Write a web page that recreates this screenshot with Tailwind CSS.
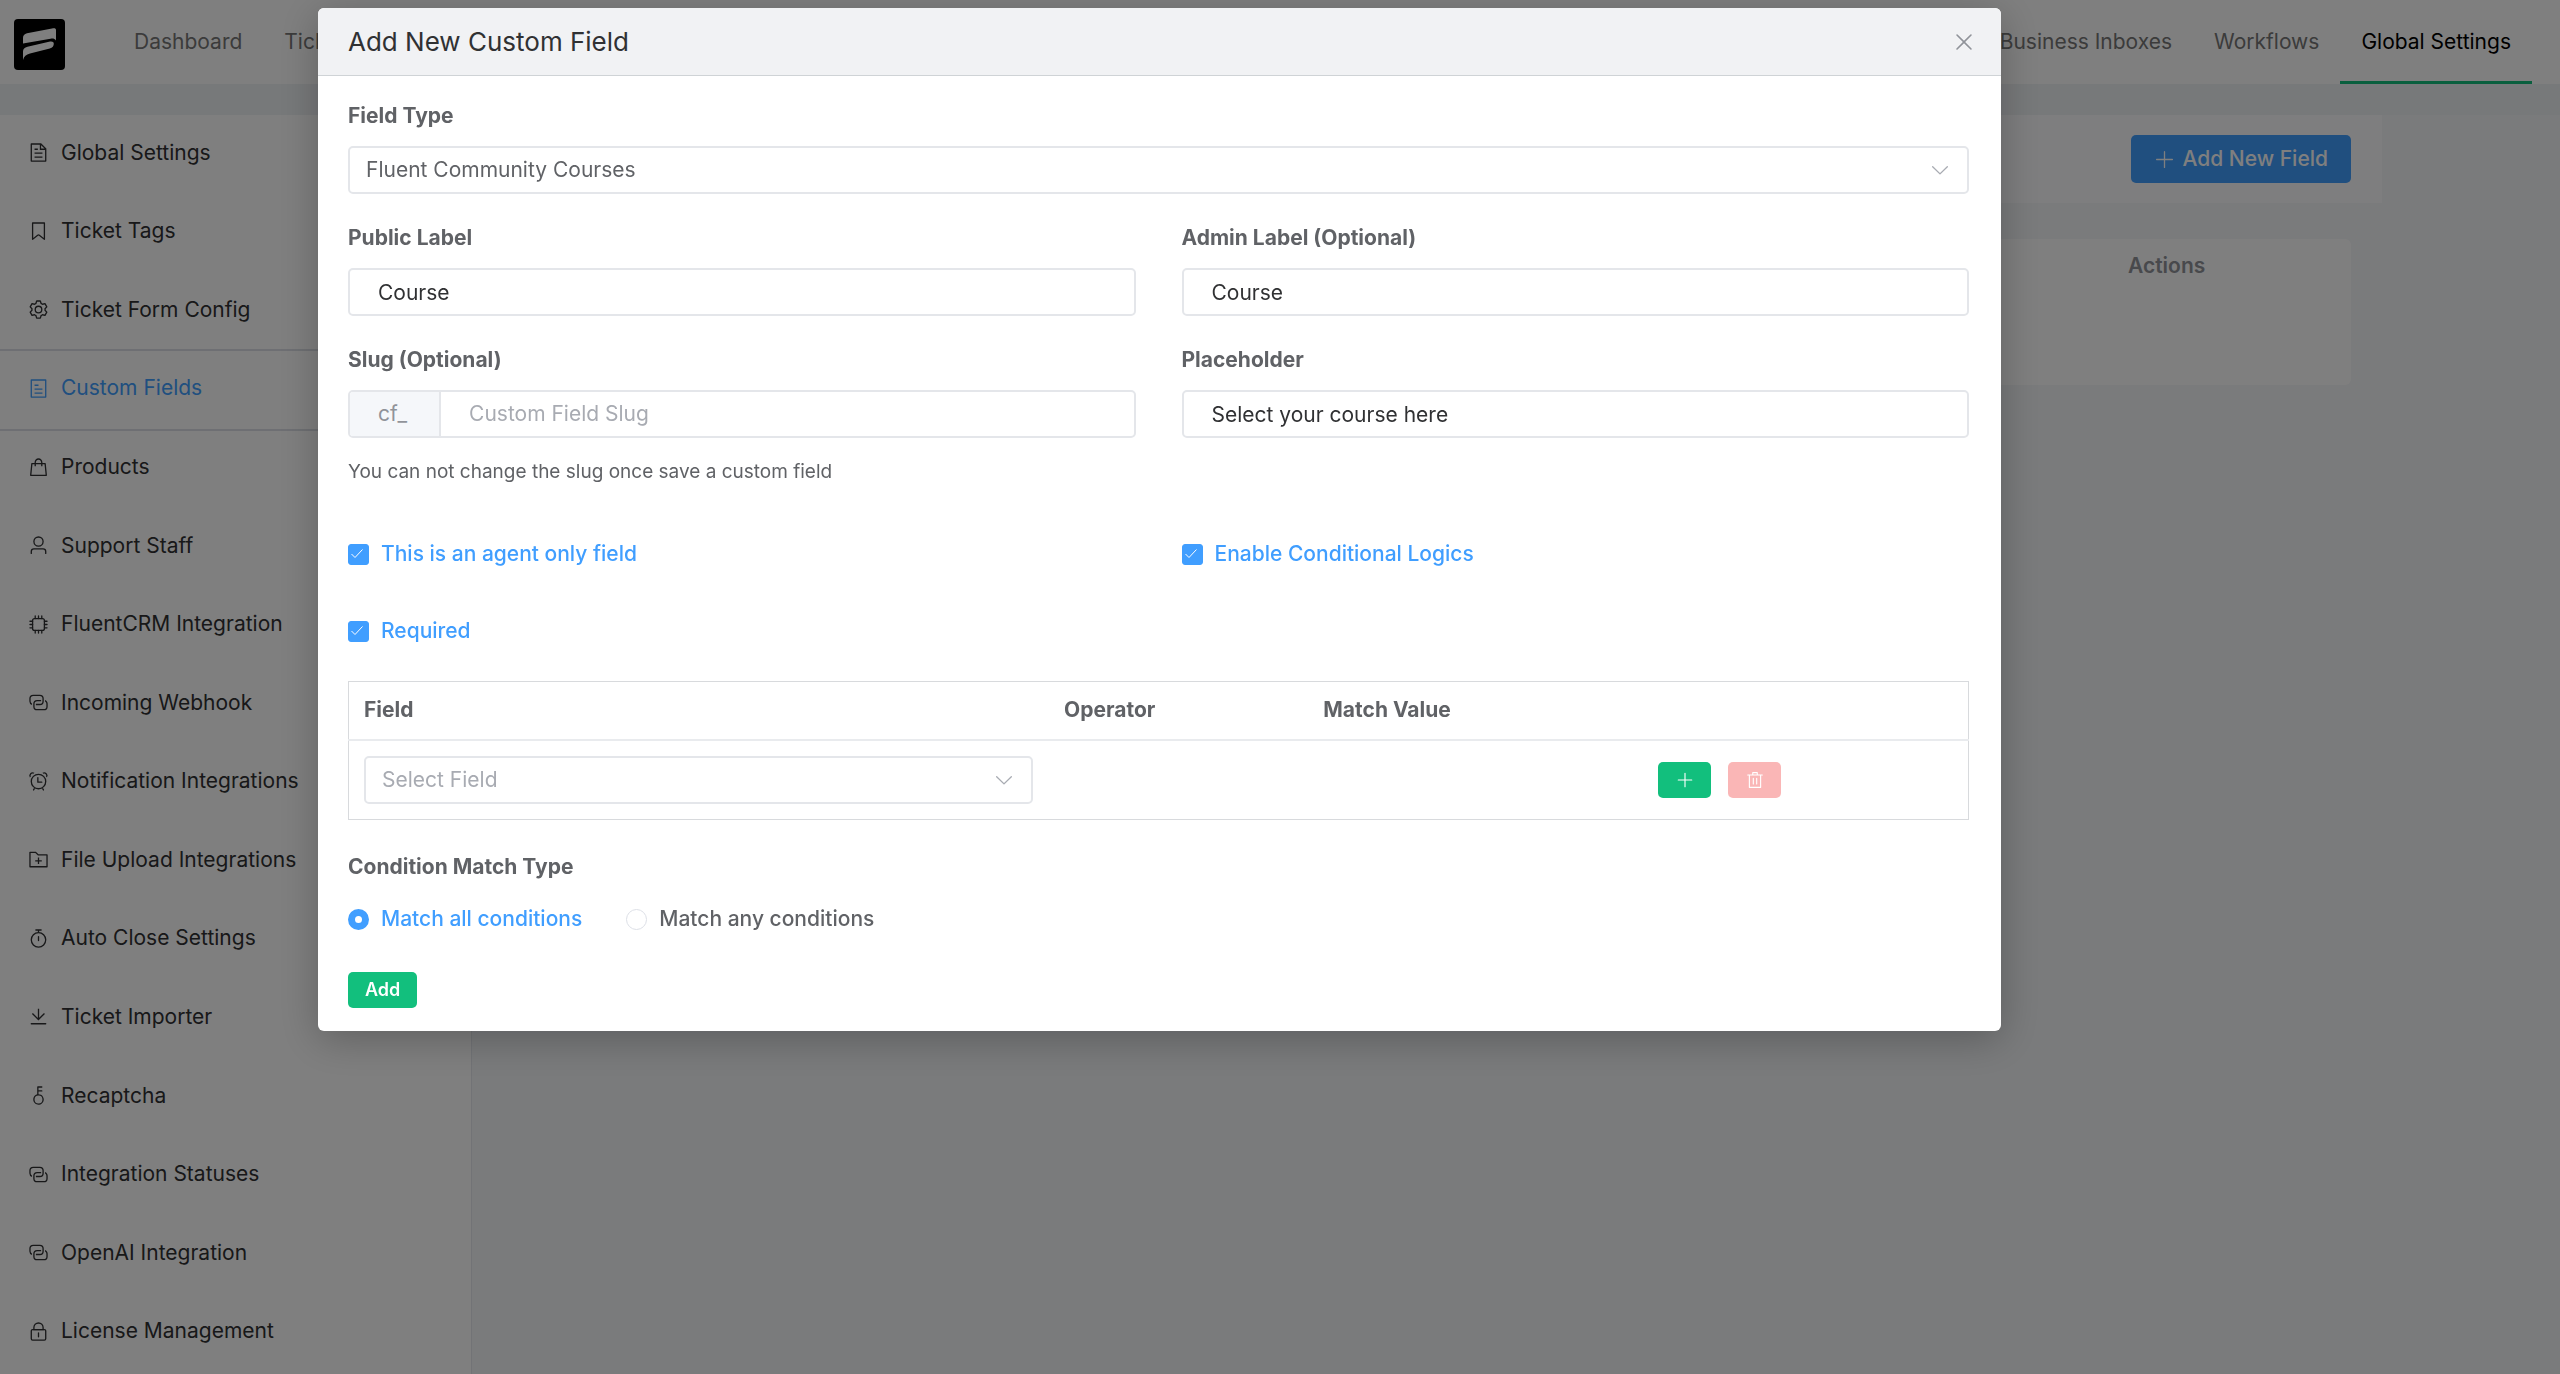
<!DOCTYPE html>
<html lang="en">
<head>
    <meta charset="UTF-8">
    <meta name="viewport" content="width=device-width, initial-scale=1.0">
    <title>Custom Fields - Global Settings</title>
    <script src="https://cdn.jsdelivr.net/npm/@tailwindcss/browser@4"></script>
</head>
<body class="h-screen overflow-hidden bg-[#f4f6f9] font-['Inter',sans-serif] text-[21px] leading-7 text-[#606266]">

    <!-- Icon set -->
    <svg class="hidden" aria-hidden="true">
        <symbol id="document" viewBox="0 0 1024 1024"><path d="M832 384H576V128H192v768h640zm-26.496-64L640 154.496V320zM160 64h480l256 256v608a32 32 0 0 1-32 32H160a32 32 0 0 1-32-32V96a32 32 0 0 1 32-32m160 448h384v64H320zm0-192h160v64H320zm0 384h384v64H320z"/></symbol>
        <symbol id="tag" viewBox="0 0 1024 1024"><path d="M256 128v698.88l196.032-156.864a96 96 0 0 1 119.936 0L768 826.816V128zm-32-64h576a32 32 0 0 1 32 32v797.44a32 32 0 0 1-51.968 24.96L531.968 720a32 32 0 0 0-39.936 0L243.968 918.4A32 32 0 0 1 192 893.44V96a32 32 0 0 1 32-32"/></symbol>
        <symbol id="setting" viewBox="0 0 1024 1024"><path d="M600.704 64a32 32 0 0 1 30.464 22.208l35.2 109.376c14.784 7.232 28.928 15.36 42.432 24.512l112.384-24.192a32 32 0 0 1 34.432 15.36L944.32 364.8a32 32 0 0 1-4.032 37.504l-77.12 85.12a357.12 357.12 0 0 1 0 49.024l77.12 85.248a32 32 0 0 1 4.032 37.504l-88.704 153.6a32 32 0 0 1-34.432 15.296L708.8 803.904c-13.44 9.088-27.648 17.28-42.368 24.512l-35.264 109.376A32 32 0 0 1 600.704 960H423.296a32 32 0 0 1-30.464-22.208L357.696 828.48a351.616 351.616 0 0 1-42.56-24.64l-112.32 24.256a32 32 0 0 1-34.432-15.36L79.68 659.2a32 32 0 0 1 4.032-37.504l77.12-85.248a357.12 357.12 0 0 1 0-48.896l-77.12-85.248A32 32 0 0 1 79.68 364.8l88.704-153.6a32 32 0 0 1 34.432-15.296l112.32 24.256c13.568-9.152 27.776-17.408 42.56-24.64l35.2-109.312A32 32 0 0 1 423.232 64H600.64zm-23.424 64H446.72l-36.352 113.088-24.512 11.968a294.113 294.113 0 0 0-34.816 20.096l-22.656 15.36-116.224-25.088-65.28 113.152 79.68 88.192-1.92 27.136a293.12 293.12 0 0 0 0 40.192l1.92 27.136-79.808 88.192 65.344 113.152 116.224-25.024 22.656 15.296a294.113 294.113 0 0 0 34.816 20.096l24.512 11.968L446.72 896h130.688l36.48-113.152 24.448-11.904a288.282 288.282 0 0 0 34.752-20.096l22.592-15.296 116.288 25.024 65.28-113.152-79.744-88.192 1.92-27.136a293.12 293.12 0 0 0 0-40.256l-1.92-27.136 79.808-88.128-65.344-113.152-116.288 24.96-22.592-15.232a287.616 287.616 0 0 0-34.752-20.096l-24.448-11.904L577.344 128zM512 320a192 192 0 1 1 0 384 192 192 0 0 1 0-384m0 64a128 128 0 1 0 0 256 128 128 0 0 0 0-256"/></symbol>
        <symbol id="tickets" viewBox="0 0 1024 1024"><path d="M192 128v768h640V128zm-32-64h704a32 32 0 0 1 32 32v832a32 32 0 0 1-32 32H160a32 32 0 0 1-32-32V96a32 32 0 0 1 32-32m160 448h384v64H320zm0-192h192v64H320zm0 384h384v64H320z"/></symbol>
        <symbol id="goods" viewBox="0 0 1024 1024"><path d="M320 288v-22.336C320 154.688 405.504 64 512 64s192 90.688 192 201.664v22.4h131.072a32 32 0 0 1 31.808 28.8l57.6 576a32 32 0 0 1-31.808 35.2H131.328a32 32 0 0 1-31.808-35.2l57.6-576a32 32 0 0 1 31.808-28.8H320zm64 0h256v-22.336C640 189.248 582.272 128 512 128c-70.272 0-128 61.248-128 137.664v22.4zm-64 64H217.92l-51.2 512h690.56l-51.264-512H704v96h-64v-96H384v96h-64z"/></symbol>
        <symbol id="user" viewBox="0 0 1024 1024"><path d="M512 512a192 192 0 1 0 0-384 192 192 0 0 0 0 384m0 64a256 256 0 1 1 0-512 256 256 0 0 1 0 512m320 320v-96a96 96 0 0 0-96-96H288a96 96 0 0 0-96 96v96a32 32 0 1 1-64 0v-96a160 160 0 0 1 160-160h448a160 160 0 0 1 160 160v96a32 32 0 1 1-64 0"/></symbol>
        <symbol id="cpu" viewBox="0 0 1024 1024"><path d="M320 256a64 64 0 0 0-64 64v384a64 64 0 0 0 64 64h384a64 64 0 0 0 64-64V320a64 64 0 0 0-64-64zm0-64h384a128 128 0 0 1 128 128v384a128 128 0 0 1-128 128H320a128 128 0 0 1-128-128V320a128 128 0 0 1 128-128"/><path fill="none" stroke="currentColor" stroke-width="64" stroke-linecap="round" d="M352 96v128M512 96v128M672 96v128M352 800v128M512 800v128M672 800v128M96 352h128M96 512h128M96 672h128M800 352h128M800 512h128M800 672h128"/></symbol>
        <symbol id="connection" viewBox="0 0 1024 1024"><path d="M640 384v64H448a128 128 0 0 0-128 128v128a128 128 0 0 0 128 128h320a128 128 0 0 0 128-128V576a128 128 0 0 0-64-110.848V394.88c74.56 26.368 128 97.472 128 181.056v128a192 192 0 0 1-192 192H448a192 192 0 0 1-192-192V576a192 192 0 0 1 192-192z"/><path d="M384 640v-64h192a128 128 0 0 0 128-128V320a128 128 0 0 0-128-128H256a128 128 0 0 0-128 128v128a128 128 0 0 0 64 110.848v70.272A192.064 192.064 0 0 1 64 448V320a192 192 0 0 1 192-192h320a192 192 0 0 1 192 192v128a192 192 0 0 1-192 192z"/></symbol>
        <symbol id="alarm" viewBox="0 0 1024 1024"><path d="M512 832a320 320 0 1 0 0-640 320 320 0 0 0 0 640m0 64a384 384 0 1 1 0-768 384 384 0 0 1 0 768"/><path d="m292.288 824.576 55.424 32-48 83.136a32 32 0 1 1-55.424-32zm439.424 0-55.424 32 48 83.136a32 32 0 1 0 55.424-32zM512 512h160a32 32 0 1 1 0 64H480a32 32 0 0 1-32-32V320a32 32 0 0 1 64 0zM90.496 312.256A160 160 0 0 1 312.32 90.496l-46.848 46.848a96 96 0 0 0-128 128L90.56 312.256zm835.264 0A160 160 0 0 0 704 90.496l46.848 46.848a96 96 0 0 1 128 128z"/></symbol>
        <symbol id="folder-add" viewBox="0 0 1024 1024"><path d="M128 192v640h768V320H485.76L357.504 192zm-32-64h287.872l128.384 128H928a32 32 0 0 1 32 32v576a32 32 0 0 1-32 32H96a32 32 0 0 1-32-32V160a32 32 0 0 1 32-32m384 416V416h64v128h128v64H544v128h-64V608H352v-64z"/></symbol>
        <symbol id="timer" viewBox="0 0 1024 1024"><path d="M512 896a320 320 0 1 0 0-640 320 320 0 0 0 0 640m0 64a384 384 0 1 1 0-768 384 384 0 0 1 0 768"/><path d="M512 384a32 32 0 0 1 32 32v192a32 32 0 1 1-64 0V416a32 32 0 0 1 32-32m32-256v96h-64v-96h-96a32 32 0 0 1 0-64h256a32 32 0 1 1 0 64z"/></symbol>
        <symbol id="download" viewBox="0 0 1024 1024"><path d="M160 832h704a32 32 0 1 1 0 64H160a32 32 0 1 1 0-64m384-253.696 236.288-236.352 45.248 45.248L508.8 704 192 387.2l45.248-45.248L480 584.704V128h64z"/></symbol>
        <symbol id="key" viewBox="0 0 1024 1024"><path d="M448 456.064V96a32 32 0 0 1 32-32.064L672 64a32 32 0 0 1 0 64H512v128h160a32 32 0 0 1 0 64H512v128a256 256 0 1 1-64 8.064M512 896a192 192 0 1 0 0-384 192 192 0 0 0 0 384"/></symbol>
        <symbol id="lock" viewBox="0 0 1024 1024"><path d="M224 448a32 32 0 0 0-32 32v384a32 32 0 0 0 32 32h576a32 32 0 0 0 32-32V480a32 32 0 0 0-32-32zm0-64h576a96 96 0 0 1 96 96v384a96 96 0 0 1-96 96H224a96 96 0 0 1-96-96V480a96 96 0 0 1 96-96"/><path d="M512 544a32 32 0 0 1 32 32v192a32 32 0 1 1-64 0V576a32 32 0 0 1 32-32m192-160v-64a192 192 0 1 0-384 0v64zM512 64a256 256 0 0 1 256 256v128H256V320A256 256 0 0 1 512 64"/></symbol>
        <symbol id="plus" viewBox="0 0 1024 1024"><path d="M480 480V128a32 32 0 0 1 64 0v352h352a32 32 0 1 1 0 64H544v352a32 32 0 1 1-64 0V544H128a32 32 0 0 1 0-64z"/></symbol>
        <symbol id="delete" viewBox="0 0 1024 1024"><path d="M160 256H96a32 32 0 0 1 0-64h256V95.936a32 32 0 0 1 32-32h256a32 32 0 0 1 32 32V192h256a32 32 0 1 1 0 64h-64v672a32 32 0 0 1-32 32H192a32 32 0 0 1-32-32zm448-64v-64H416v64zM224 896h576V256H224zm192-128a32 32 0 0 1-32-32V416a32 32 0 0 1 64 0v320a32 32 0 0 1-32 32m192 0a32 32 0 0 1-32-32V416a32 32 0 0 1 64 0v320a32 32 0 0 1-32 32"/></symbol>
        <symbol id="close" viewBox="0 0 1024 1024"><path d="M764.288 214.592 512 466.88 259.712 214.592a31.936 31.936 0 0 0-45.12 45.12L466.752 512 214.528 764.224a31.936 31.936 0 1 0 45.12 45.184L512 557.184l252.288 252.288a31.936 31.936 0 0 0 45.12-45.12L557.12 512.064l252.288-252.352a31.936 31.936 0 1 0-45.12-45.184z"/></symbol>
        <symbol id="arrow-down" viewBox="0 0 1024 1024"><path d="M831.872 340.864 512 652.672 192.128 340.864a30.592 30.592 0 0 0-42.752 0 29.12 29.12 0 0 0 0 41.6L489.664 714.24a32 32 0 0 0 44.672 0l340.288-331.712a29.12 29.12 0 0 0 0-41.728 30.592 30.592 0 0 0-42.752 0z"/></symbol>
        <symbol id="check" viewBox="0 0 21 21"><path fill="none" stroke="currentColor" stroke-width="1" d="M3.500 10 7 13.500 14.500 5.500"/></symbol>
    </svg>

    <!-- Page -->
    <div class="flex h-full flex-col">
        <header class="flex h-[84px] shrink-0 items-center justify-between bg-white pl-[14px] pr-7">
            <div class="flex h-full items-center gap-12">
                <a href="#" aria-label="Home" class="mt-1">
                    <svg class="size-[51px]" viewBox="0 0 51 51">
                        <rect width="51" height="51" rx="4" fill="#000"/>
                        <path fill="#fff" d="M9 24.500v-5.500c0-2.500 1.300-4 4-4.700L38 9.500c2.500-.6 4-.2 4 1.500v10.500c-1.500-1.800-3-2.300-5.500-1.700z"/>
                        <path fill="#fff" d="M9 41v-8.500c0-2.500 1.500-4 4.500-4.700L35 22.800c3-.7 4.800 0 4.800 2 0 2.300-1.300 4-4 4.700L16 34.500c-4 1-6 2.800-7 6.500z"/>
                    </svg>
                </a>
                <nav class="flex h-full">
                    <a href="#" class="flex items-center px-[21px] text-[#777]">Dashboard</a>
                    <a href="#" class="flex items-center px-[21px] text-[#777]">Tickets</a>
                </nav>
            </div>
            <nav class="flex h-full">
                <a href="#" class="flex items-center px-[21px] text-[#777]">Business Inboxes</a>
                <a href="#" class="flex items-center px-[21px] text-[#777]">Workflows</a>
                <a href="#" class="flex items-center border-b-3 border-[#12bf7d] px-[21px] pt-[3px] text-black">Global Settings</a>
            </nav>
        </header>

        <div class="h-[31px] shrink-0 bg-[#eff2f5]"></div>

        <div class="flex min-h-0 flex-1">
            <aside class="flex w-[472px] shrink-0 flex-col border-r border-[#e4e7ed] bg-white pb-[2px] text-[#303133]">
                <nav class="grid flex-1 auto-rows-fr">
                    <a href="#" class="flex items-center gap-3 pb-[3px] pl-7"><svg class="size-[21px] fill-current"><use href="#document"/></svg>Global Settings</a>
                    <a href="#" class="flex items-center gap-3 pb-[3px] pl-7"><svg class="size-[21px] fill-current"><use href="#tag"/></svg>Ticket Tags</a>
                    <a href="#" class="flex items-center gap-3 pb-[3px] pl-7"><svg class="size-[21px] fill-current"><use href="#setting"/></svg>Ticket Form Config</a>
                    <a href="#" class="-my-0.5 flex items-center gap-3 border-y-2 border-[#dcdfe6] pb-[3px] pl-7 text-[#409eff]"><svg class="size-[21px] fill-current"><use href="#tickets"/></svg>Custom Fields</a>
                    <a href="#" class="flex items-center gap-3 pb-[3px] pl-7"><svg class="size-[21px] fill-current"><use href="#goods"/></svg>Products</a>
                    <a href="#" class="flex items-center gap-3 pb-[3px] pl-7"><svg class="size-[21px] fill-current"><use href="#user"/></svg>Support Staff</a>
                    <a href="#" class="flex items-center gap-3 pb-[3px] pl-7"><svg class="size-[21px] fill-current"><use href="#cpu"/></svg>FluentCRM Integration</a>
                    <a href="#" class="flex items-center gap-3 pb-[3px] pl-7"><svg class="size-[21px] fill-current"><use href="#connection"/></svg>Incoming Webhook</a>
                    <a href="#" class="flex items-center gap-3 pb-[3px] pl-7"><svg class="size-[21px] fill-current"><use href="#alarm"/></svg>Notification Integrations</a>
                    <a href="#" class="flex items-center gap-3 pb-[3px] pl-7"><svg class="size-[21px] fill-current"><use href="#folder-add"/></svg>File Upload Integrations</a>
                    <a href="#" class="flex items-center gap-3 pb-[3px] pl-7"><svg class="size-[21px] fill-current"><use href="#timer"/></svg>Auto Close Settings</a>
                    <a href="#" class="flex items-center gap-3 pb-[3px] pl-7"><svg class="size-[21px] fill-current"><use href="#download"/></svg>Ticket Importer</a>
                    <a href="#" class="flex items-center gap-3 pb-[3px] pl-7"><svg class="size-[21px] fill-current"><use href="#key"/></svg>Recaptcha</a>
                    <a href="#" class="flex items-center gap-3 pb-[3px] pl-7"><svg class="size-[21px] fill-current"><use href="#connection"/></svg>Integration Statuses</a>
                    <a href="#" class="flex items-center gap-3 pb-[3px] pl-7"><svg class="size-[21px] fill-current"><use href="#connection"/></svg>OpenAI Integration</a>
                    <a href="#" class="flex items-center gap-3 pb-[3px] pl-7"><svg class="size-[21px] fill-current"><use href="#lock"/></svg>License Management</a>
                </nav>
            </aside>

            <main class="flex-1 pr-[178px]">
                <div class="flex justify-end bg-[#fdfdfe] px-[31px] py-5">
                    <button type="button" class="flex h-12 items-center gap-2 rounded-[5px] bg-[#409eff] px-[23px] font-medium text-white"><svg class="size-[21px] fill-current"><use href="#plus"/></svg>Add New Field</button>
                </div>
                <div class="mx-[31px] mt-9 min-h-[146px] rounded-md bg-white">
                    <table class="w-full">
                        <thead>
                            <tr>
                                <td></td>
                                <th scope="col" class="w-[223px] pt-[13px] text-left font-semibold text-[#909399]">Actions</th>
                            </tr>
                        </thead>
                    </table>
                </div>
            </main>
        </div>
    </div>

    <!-- Add field dialog -->
    <div class="fixed inset-0 bg-black/50 pl-[318px] pr-[559px] pt-2">
        <div role="dialog" aria-modal="true" aria-labelledby="dialog-title" class="overflow-hidden rounded-md bg-white shadow-[0_8px_40px_rgba(0,0,0,0.25)]">
            <div class="flex h-[68px] items-center justify-between border-b border-[#cfd3d6] bg-[#f1f2f4] pl-[30px] pr-6">
                <h2 id="dialog-title" class="text-[26px] leading-8 text-[#303133]">Add New Custom Field</h2>
                <button type="button" aria-label="Close" class="text-[#909399]"><svg class="size-[26px] fill-current"><use href="#close"/></svg></button>
            </div>

            <form class="pb-[23px] pl-[30px] pr-8 pt-[26px]">
                <div class="flex flex-col gap-4">
                    <label for="field-type" class="font-bold">Field Type</label>
                    <div class="relative">
                        <select id="field-type" class="block h-12 w-full appearance-none rounded-[5px] border-2 border-[#e4e6ea] px-4">
                            <option>Fluent Community Courses</option>
                        </select>
                        <svg class="pointer-events-none absolute right-[18px] top-[13px] size-[22px] fill-[#a8abb2]"><use href="#arrow-down"/></svg>
                    </div>
                </div>

                <div class="mt-[30px] grid grid-cols-2 gap-x-[46px] gap-y-[30px]">
                    <div class="flex flex-col gap-4">
                        <label for="public-label" class="font-bold">Public Label</label>
                        <input id="public-label" type="text" value="Course" class="h-12 rounded-[5px] border-2 border-[#e4e6ea] px-7 text-[#303133]">
                    </div>
                    <div class="flex flex-col gap-4">
                        <label for="admin-label" class="font-bold">Admin Label (Optional)</label>
                        <input id="admin-label" type="text" value="Course" class="h-12 rounded-[5px] border-2 border-[#e4e6ea] px-7 text-[#303133]">
                    </div>
                    <div class="flex flex-col gap-4">
                        <label for="slug" class="font-bold">Slug (Optional)</label>
                        <div class="flex h-12 overflow-hidden rounded-[5px] border-2 border-[#e4e6ea]">
                            <span class="flex items-center border-r-2 border-[#e4e6ea] bg-[#f5f7fa] pl-7 pr-8 text-[#909399]">cf_</span>
                            <input id="slug" type="text" placeholder="Custom Field Slug" class="flex-1 px-7 placeholder:text-[#a8abb2]">
                        </div>
                        <p class="mt-1 text-[19px]">You can not change the slug once save a custom field</p>
                    </div>
                    <div class="flex flex-col gap-4">
                        <label for="placeholder" class="font-bold">Placeholder</label>
                        <input id="placeholder" type="text" value="Select your course here" class="h-12 rounded-[5px] border-2 border-[#e4e6ea] px-7 text-[#303133]">
                    </div>
                </div>

                <div class="mt-[54px] grid grid-cols-2 gap-x-[46px] gap-y-[49px] font-medium text-[#409eff]">
                    <label class="flex items-center gap-3">
                        <span class="relative size-[21px]">
                            <input type="checkbox" checked class="peer block size-[21px] appearance-none rounded-[3px] border border-[#dcdfe6] checked:border-[#409eff] checked:bg-[#409eff]">
                            <svg class="pointer-events-none absolute inset-0 hidden size-[21px] text-white peer-checked:block"><use href="#check"/></svg>
                        </span>
                        This is an agent only field
                    </label>
                    <label class="flex items-center gap-3">
                        <span class="relative size-[21px]">
                            <input type="checkbox" checked class="peer block size-[21px] appearance-none rounded-[3px] border border-[#dcdfe6] checked:border-[#409eff] checked:bg-[#409eff]">
                            <svg class="pointer-events-none absolute inset-0 hidden size-[21px] text-white peer-checked:block"><use href="#check"/></svg>
                        </span>
                        Enable Conditional Logics
                    </label>
                    <label class="flex items-center gap-3">
                        <span class="relative size-[21px]">
                            <input type="checkbox" checked class="peer block size-[21px] appearance-none rounded-[3px] border border-[#dcdfe6] checked:border-[#409eff] checked:bg-[#409eff]">
                            <svg class="pointer-events-none absolute inset-0 hidden size-[21px] text-white peer-checked:block"><use href="#check"/></svg>
                        </span>
                        Required
                    </label>
                </div>

                <table class="mt-9 w-full table-fixed border border-[#d8dadd] text-left">
                    <thead>
                        <tr class="h-[58px] border-b-2 border-[#e9ebee]">
                            <th scope="col" class="w-[43%] px-[15px] font-bold">Field</th>
                            <th scope="col" class="w-[16%] px-[19px] font-bold">Operator</th>
                            <th scope="col" class="w-[21%] px-[19px] font-bold">Match Value</th>
                            <td></td>
                        </tr>
                    </thead>
                    <tbody>
                        <tr class="h-20">
                            <td class="pl-[15px] pr-3">
                                <div class="relative">
                                    <select aria-label="Select Field" class="block h-12 w-full appearance-none rounded-[5px] border-2 border-[#e4e6ea] px-4 text-[#a8abb2]">
                                        <option>Select Field</option>
                                    </select>
                                    <svg class="pointer-events-none absolute right-[18px] top-[13px] size-[22px] fill-[#a8abb2]"><use href="#arrow-down"/></svg>
                                </div>
                            </td>
                            <td></td>
                            <td></td>
                            <td class="px-[14px]">
                                <div class="flex gap-[17px]">
                                    <button type="button" aria-label="Add condition" class="flex h-9 w-[53px] items-center justify-center rounded-[5px] bg-[#12bf7d] text-white"><svg class="size-[18px] fill-current"><use href="#plus"/></svg></button>
                                    <button type="button" disabled aria-label="Delete condition" class="flex h-9 w-[53px] items-center justify-center rounded-[5px] bg-[#fab6b6] text-white"><svg class="size-[18px] fill-current"><use href="#delete"/></svg></button>
                                </div>
                            </td>
                        </tr>
                    </tbody>
                </table>

                <fieldset class="mt-[33px]">
                    <legend class="font-bold">Condition Match Type</legend>
                    <div class="mt-6 flex gap-11 font-medium">
                        <label class="flex items-center gap-3 text-[#409eff]">
                            <input type="radio" name="match" checked class="size-[21px] appearance-none rounded-full border border-[#dcdfe6] checked:border-[7px] checked:border-[#409eff]">
                            Match all conditions
                        </label>
                        <label class="flex items-center gap-3">
                            <input type="radio" name="match" class="size-[21px] appearance-none rounded-full border border-[#dcdfe6] checked:border-[7px] checked:border-[#409eff]">
                            Match any conditions
                        </label>
                    </div>
                </fieldset>

                <button type="submit" class="mt-[39px] block h-9 rounded-[5px] bg-[#12bf7d] px-[17px] text-lg font-semibold text-white">Add</button>
            </form>
        </div>
    </div>
</body>
</html>
